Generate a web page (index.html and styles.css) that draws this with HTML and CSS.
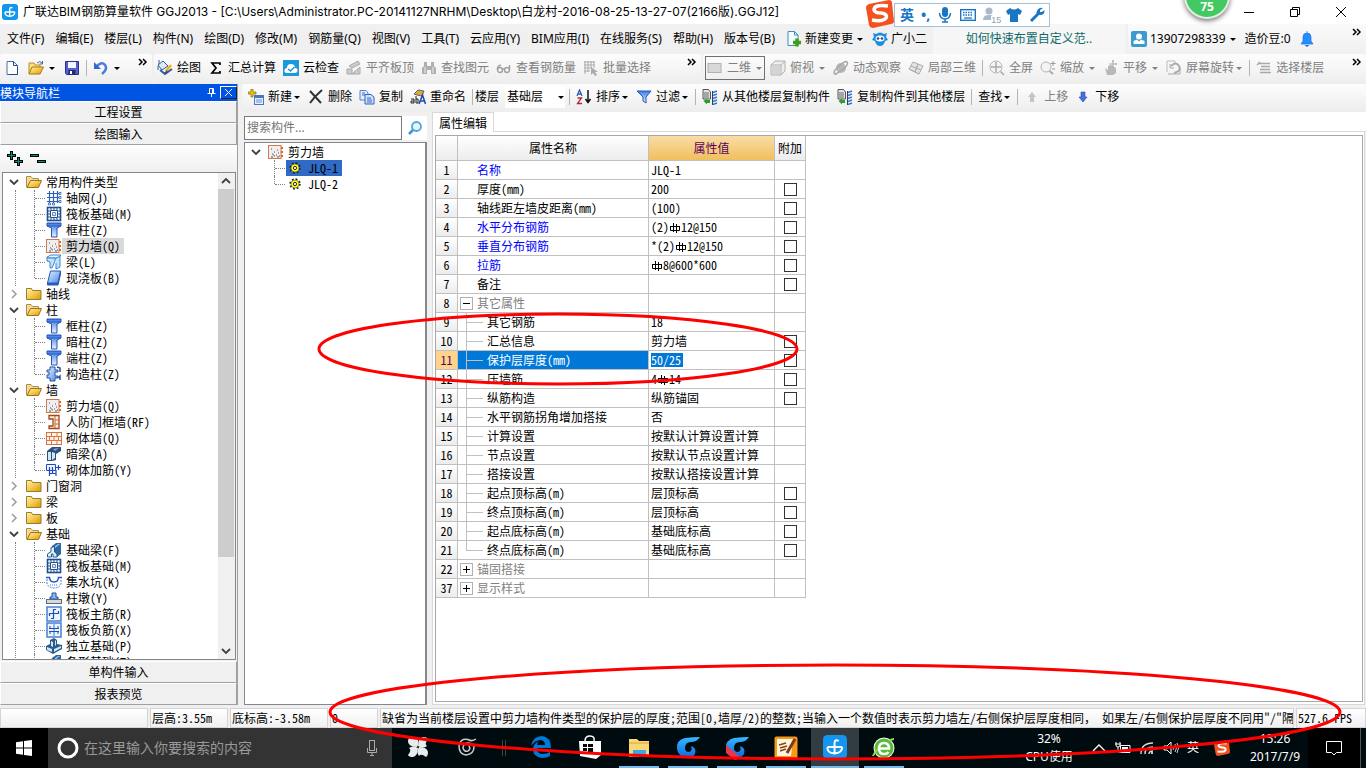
FILE: index.html
```html
<!DOCTYPE html>
<html lang="zh-CN">
<head>
<meta charset="utf-8">
<title>广联达BIM钢筋算量软件 GGJ2013</title>
<link rel="stylesheet" href="styles.css">
</head>
<body>
<svg class="defs" aria-hidden="true">
<defs>
<linearGradient id="gold" x1="0" y1="0" x2="1" y2="1"><stop offset="0" stop-color="#fff3b0"/><stop offset=".5" stop-color="#f6c850"/><stop offset="1" stop-color="#d8960c"/></linearGradient>
<linearGradient id="blue" x1="0" y1="0" x2="0" y2="1"><stop offset="0" stop-color="#3a78e8"/><stop offset="1" stop-color="#e8f4ff"/></linearGradient>
<linearGradient id="blue2" x1="0" y1="0" x2="1" y2="1"><stop offset="0" stop-color="#e4f2ff"/><stop offset="1" stop-color="#4a88e8"/></linearGradient>
<linearGradient id="swirl" x1="0" y1="0" x2="0" y2="1"><stop offset="0" stop-color="#38b8ff"/><stop offset="1" stop-color="#0868e0"/></linearGradient>
<symbol id="app" viewBox="0 0 16 16"><rect width="16" height="16" rx="3" fill="#1296f0"/><path d="M10.500 4Q7.700 2.500 7.700 5.500V12.500M3 8H12.800M3 8Q2.500 12 7.700 12.300Q12.800 12 12.800 8" fill="none" stroke="#fff" stroke-width="1.300"/></symbol>
<symbol id="new" viewBox="0 0 16 16"><path d="M3 1.500H9.500L13.500 5.500V14.500H3Z" fill="#fff" stroke="#4a6fa5"/><path d="M9.500 1.500V5.500H13.500M13.500 7V14.500H5" fill="none" stroke="#234a80"/></symbol>
<symbol id="open" viewBox="0 0 16 16"><path d="M1 14V3H6L7 5H12V7" fill="#fbe08a" stroke="#b8901c"/><path d="M1 14L4 7H15.500L12 14Z" fill="url(#gold)" stroke="#a87808"/><path d="M9 3Q12 0 14 3M14.500 1V4H11.500" fill="none" stroke="#446a90"/></symbol>
<symbol id="save" viewBox="0 0 16 16"><path d="M1.500 1.500H14.500V14.500H2.500L1.500 13Z" fill="#5560c8" stroke="#272f90"/><rect x="4" y="2" width="8" height="6" fill="#f4f6ff"/><rect x="4.500" y="10" width="7" height="5" fill="#222c70"/><rect x="6" y="11" width="2" height="3" fill="#fff"/></symbol>
<symbol id="undo" viewBox="0 0 16 16"><path d="M4 6Q9 1 12 5T9 14" fill="none" stroke="#4c7be0" stroke-width="2.500"/><path d="M1 2V9H8Z" fill="#3468d0"/></symbol>
<symbol id="chev" viewBox="0 0 10 8"><path d="M1 1L4 4L1 7M5 1L8 4L5 7" fill="none" stroke="#000" stroke-width="1.500"/></symbol>
<symbol id="caret" viewBox="0 0 8 8"><path d="M1 3H7L4 6Z" fill="currentColor"/></symbol>
<symbol id="paint" viewBox="0 0 16 16"><path d="M1 5L6 1L11 6L5 10Z" fill="#dce9ff" stroke="#345a98"/><path d="M2 4V0M1 6V10" stroke="#345a98"/><path d="M3 10L8 14L15 9" fill="none" stroke="#345a98" stroke-width="2"/><path d="M9 11L14 5" stroke="#f0b020" stroke-width="2.500"/><path d="M7 13L10 10L11 13Z" fill="#2b4f8a"/></symbol>
<symbol id="sigma" viewBox="0 0 16 16"><path d="M12 5V3H4L8 8L4 13H12V11" fill="none" stroke="#000" stroke-width="1.700"/></symbol>
<symbol id="cloud" viewBox="0 0 16 16"><rect width="16" height="16" fill="#1d98dc"/><path d="M4 13Q1 13 1.500 10Q2 8 4 8Q4 4 8 4Q12 4 12 8Q15 8 14.500 11Q14 13 12 13Z" fill="#fff"/><path d="M5 9L7.500 11L11.500 7" fill="none" stroke="#1d98dc" stroke-width="1.500"/></symbol>
<symbol id="align" viewBox="0 0 16 16"><path d="M3 6L12 1L14 4L6 8ZM1 9H6V14H1Z" fill="#ccc" stroke="#a8a8a8"/><path d="M6 14L14 7V14Z" fill="#ddd" stroke="#a8a8a8"/><path d="M9 11V14M12 9V14" stroke="#a8a8a8"/></symbol>
<symbol id="binoc" viewBox="0 0 16 16"><path d="M3 2H6V6H10V2H13V6L15 8V14H10V10H6V14H1V8L3 6Z" fill="#b0b0b0"/><path d="M4 7V13M12 7V13" stroke="#eee"/></symbol>
<symbol id="glasses" viewBox="0 0 16 16"><circle cx="4" cy="10" r="2.500" fill="none" stroke="#a0a0a0" stroke-width="1.400"/><circle cx="11" cy="10" r="2.500" fill="none" stroke="#a0a0a0" stroke-width="1.400"/><path d="M1.500 10Q1 6 5 5M13.500 10V5M6 9H9" fill="none" stroke="#a0a0a0" stroke-width="1.400"/></symbol>
<symbol id="batch" viewBox="0 0 16 16"><path d="M1 2H12M1 5H12M1 8H8M1 11H7M2 1V14M5 1V12M8 1V8M11 1V8" stroke="#aaa"/><path d="M8 7L15 12L12 12L14 15L12 16L10 13L8 15Z" fill="#aaa"/></symbol>
<symbol id="rect" viewBox="0 0 16 16"><rect x="1" y="3.500" width="13" height="9" fill="#d8d8d8" stroke="#b0b0b0"/></symbol>
<symbol id="cube" viewBox="0 0 16 16"><path d="M1 5L5 1H15V11L11 15H1Z" fill="#eee" stroke="#b0b0b0"/><path d="M1 5H11V15M11 5L15 1" fill="none" stroke="#b0b0b0"/><path d="M2 6H10V14H2Z" fill="#d4d4d4"/></symbol>
<symbol id="orbit" viewBox="0 0 16 16"><circle cx="8" cy="8" r="5" fill="#b8b8b8"/><path d="M2 14Q-1 12 6 6T14 2Q16 5 9 10T2 14Z" fill="none" stroke="#a8a8a8" stroke-width="1.500"/></symbol>
<symbol id="part3" viewBox="0 0 16 16"><path d="M1 9L5 2L10 4L7 12ZM7 12L10 4L15 6L11 14ZM3 6L13 10M1 9L11 14" fill="#e4e4e4" stroke="#adadad"/></symbol>
<symbol id="full" viewBox="0 0 16 16"><circle cx="7" cy="7" r="6" fill="#f4f4f4" stroke="#b4b4b4"/><path d="M7 2V12M2 7H12M11.500 11.500L15 15" stroke="#aaa" stroke-width="1.500"/></symbol>
<symbol id="zoomi" viewBox="0 0 16 16"><circle cx="6" cy="7" r="5" fill="#f4f4f4" stroke="#b4b4b4"/><path d="M9.500 11L13 14" stroke="#aaa" stroke-width="2"/><path d="M13 1V6M10.500 3.500H15.500M12 9H15" stroke="#999"/></symbol>
<symbol id="pan" viewBox="0 0 16 16"><path d="M2 8L5 10V6L8 5L13 8V13L10 15H4Z" fill="#b8b8b8"/><path d="M10 0V8M6 4H14M9 1H11M13 3V5" stroke="#aaa"/></symbol>
<symbol id="rot" viewBox="0 0 16 16"><path d="M1 1H9V3M1 1V12" fill="none" stroke="#bbb"/><path d="M5 6Q10 1 13 6T8 13" fill="none" stroke="#aaa" stroke-width="2"/><path d="M4 4V8H8M2 14H14V9" fill="none" stroke="#aaa"/></symbol>
<symbol id="floor" viewBox="0 0 16 16"><path d="M3 3.500H14M5 6.500H14M4 9.500H14M4 12.500H15M1 5L4 2" stroke="#a8a8a8" stroke-width="1.500"/></symbol>
<symbol id="add" viewBox="0 0 16 16"><path d="M3 0H5V3H8V5H5V8H3V5H0V3H3Z" fill="#f0c818" stroke="#8b6a00" stroke-width=".7"/><rect x="6.500" y="6.500" width="9" height="9" fill="#e4efff" stroke="#4878c0"/><path d="M7 8H15" stroke="#4878c0" stroke-width="2"/><path d="M8 11H14M8 13H14" stroke="#7090c0"/></symbol>
<symbol id="del" viewBox="0 0 16 16"><path d="M2 2L13 14M14 1Q7 7 2 14" fill="none" stroke="#333" stroke-width="2"/></symbol>
<symbol id="copy" viewBox="0 0 16 16"><path d="M1 1.500H7L9 4V11H1Z" fill="#e5f0ff" stroke="#5080c8"/><path d="M6 5.500H12L15 8V15H6Z" fill="#cfe2ff" stroke="#3562b8"/><path d="M3 4H6M3 6H6M8 9H12M8 11H13M8 13H13" stroke="#3868b8"/></symbol>
<symbol id="ren" viewBox="0 0 16 16"><path d="M4 5L8 1L14 2L12 7L7 6Z" fill="#dfa83c" stroke="#5f6470"/><path d="M1 10H4V14H1V12H4M6 7V14H8V10H6" fill="none" stroke="#222"/><path d="M9 15L12.500 6L15.500 15M10 12H15" fill="none" stroke="#1f4fa8" stroke-width="1.600"/></symbol>
<symbol id="az" viewBox="0 0 16 16"><path d="M1 7L3.500 1L6 7M2 5H5" fill="none" stroke="#3858b8" stroke-width="1.300"/><path d="M1.500 9H5.500L1.500 14.500H6" fill="none" stroke="#b02838" stroke-width="1.300"/><path d="M12 1V13M9.500 10L12 13.500L14.500 10" fill="none" stroke="#111" stroke-width="1.500"/></symbol>
<symbol id="filter" viewBox="0 0 16 16"><path d="M1 2H15L10 8V14L7 12V8Z" fill="url(#blue)" stroke="#2858b8"/></symbol>
<symbol id="cpf" viewBox="0 0 16 16"><path d="M1 .5H6.500L8.500 3V10H1Z" fill="#e4e4e4" stroke="#555"/><path d="M2 4H7M2 6H7M2 8H7" stroke="#666"/><path d="M11 3.500L15 2M11 6.500L15 5M11 9.500L15 8M11 12.500L15 11M11 15.500L15 14" stroke="#3878c8" stroke-width="1.500"/><path d="M10.500 2V16" stroke="#24406c"/><path d="M1.500 12L5 9.500V11H8V14H5V15.500Z" fill="#2ca02c"/></symbol>
<symbol id="up" viewBox="0 0 16 16"><path d="M8 3L12 8H10V13H6V8H4Z" fill="#c4c4c4"/></symbol>
<symbol id="down" viewBox="0 0 16 16"><path d="M8 13L12 8H10V3H6V8H4Z" fill="#4670e0" stroke="#2848a8" stroke-width=".6"/></symbol>
<symbol id="newdoc" viewBox="0 0 16 16"><path d="M2 .500H8.500L12 4V14.500H2Z" fill="#f4fbff" stroke="#3a90c0"/><path d="M8.500 .500V4H12" fill="none" stroke="#3a90c0"/><path d="M11 7.500V15.500M7 11.500H15" stroke="#3d9e18" stroke-width="3.500"/></symbol>
<symbol id="owl" viewBox="0 0 16 16"><path d="M1 2L4 3Q8 0 12 3L15 2L14 6L16 9L13 10Q12 15 8 15Q4 15 3 10L0 9L2 6Z" fill="#1e8ce0"/><ellipse cx="8" cy="7.500" rx="4.500" ry="3" fill="#fff"/><circle cx="6" cy="7.500" r="1.300" fill="#124f9c"/><circle cx="10" cy="7.500" r="1.300" fill="#124f9c"/></symbol>
<symbol id="user" viewBox="0 0 16 16"><rect width="16" height="16" rx="2" fill="#3b9bcf"/><circle cx="8" cy="5.500" r="3" fill="#fff"/><path d="M2.500 13V10L6 8.500L8 10.500L10 8.500L13.500 10V13Z" fill="#fff"/></symbol>
<symbol id="bell" viewBox="0 0 16 16"><path d="M8 0V2M4 10V6Q4 2 8 2T12 6V10L14 13H2Z" fill="#2490ff" stroke="#2074d8" stroke-width=".7"/><path d="M5.500 14H10.500L8 16Z" fill="#1878e8"/></symbol>
<symbol id="sogou" viewBox="0 0 28 28"><path d="M3 4L23 0Q26 0 26 3L28 21Q28 24 25 24L7 28Q4 28 3 25L0 8Q0 5 3 4Z" fill="#f4511e"/><path d="M22 6Q8 4 8 10Q9 13 15 13Q22 14 20 18Q17 22 6 20" fill="none" stroke="#fff" stroke-width="3.500"/></symbol>
<symbol id="mic" viewBox="0 0 16 16"><rect x="5" y="0" width="6" height="10" rx="3" fill="currentColor"/><path d="M2.500 6Q3 12 8 12T13.500 6M8 12V15M5 15H11" fill="none" stroke="currentColor" stroke-width="1.500"/></symbol>
<symbol id="micline" viewBox="0 0 12 16"><rect x="3.500" y=".5" width="5" height="10" fill="none" stroke="#aaa"/><path d="M1.500 8V12.500H10.500V8M6 13V15.500M4 15.500H8" fill="none" stroke="#aaa"/></symbol>
<symbol id="kbd" viewBox="0 0 16 16"><rect x=".7" y="2.700" width="14.600" height="10.600" fill="#fff" stroke="#1976c5" stroke-width="1.400"/><path d="M3 5.500H13M3 8H13" stroke="#1976c5" stroke-width="1.500" stroke-dasharray="1.500 1"/><path d="M4 11H12" stroke="#1976c5" stroke-width="1.300"/></symbol>
<symbol id="person" viewBox="0 0 16 16"><circle cx="6" cy="4" r="3.500" fill="#a9b9cb"/><path d="M0 13Q0 8 6 8T11 13Z" fill="#a9b9cb"/></symbol>
<symbol id="shirt" viewBox="0 0 16 16"><path d="M4 1Q8 4 12 1L16 4L14 8L12 7V15H4V7L2 8L0 4Z" fill="#1976c5"/></symbol>
<symbol id="wrench" viewBox="0 0 16 16"><path d="M2 14L9 7" stroke="#1976c5" stroke-width="3"/><path d="M14 1L11 3V5H13L15.500 3Q16 8 11 8T8 4T14 1Z" fill="#1976c5"/></symbol>
<symbol id="mag" viewBox="0 0 16 16"><circle cx="9.500" cy="6.500" r="4.500" fill="#e4f6ff" stroke="#4aa5e0" stroke-width="1.800"/><path d="M6 10L2 14" stroke="#3b96d8" stroke-width="2.500"/></symbol>
<symbol id="exp" viewBox="0 0 16 16"><path d="M4 6L8 10L12 6" fill="none" stroke="#404040" stroke-width="1.800"/></symbol>
<symbol id="col" viewBox="0 0 16 16"><path d="M6 4L10 8L6 12" fill="none" stroke="#a0a0a0" stroke-width="1.600"/></symbol>
<symbol id="fopen" viewBox="0 0 16 16"><path d="M.5 13V2.500H5L6.500 4.500H12.500V7" fill="#f6dc88" stroke="#a89058"/><path d="M1 13.500L4.500 6.500H15.500L12.500 13.500Z" fill="url(#gold)" stroke="#9c7418"/></symbol>
<symbol id="fold" viewBox="0 0 16 16"><path d="M.5 13.500V2.500H5.500L6.500 4.500H15V13.500Z" fill="url(#gold)" stroke="#9c7c28"/></symbol>
<symbol id="grid" viewBox="0 0 16 16"><path d="M3.500 1V13M7.500 1V13M11.500 1V13M1 3.500H13M1 7.500H13M1 11.500H13" stroke="#2f62b4" stroke-width="1.200"/><path d="M13 2.500H15V4.500H13ZM13 6.500H15V8.500H13ZM13 10.500H15V12.500H13ZM2.500 13H4.500V15H2.500ZM6.500 13H8.500V15H6.500Z" fill="#fff" stroke="#2f62b4" stroke-width=".8"/></symbol>
<symbol id="raft" viewBox="0 0 16 16"><rect x="1.500" y="1.500" width="13" height="13" fill="#fff" stroke="#1d4e90" stroke-width="1.600"/><path d="M4.500 4.500H11.500V11.500H4.500Z" fill="none" stroke="#1d4e90"/><path d="M6.500 6.500H9.500V9.500H6.500Z" fill="#dce9ff" stroke="#1d4e90" stroke-width=".6"/><path d="M5 2V4M8 2V4M11 2V4M5 12V14M8 12V14M11 12V14M2 5H4M2 8H4M2 11H4M12 5H14M12 8H14M12 11H14" stroke="#1d4e90"/></symbol>
<symbol id="post" viewBox="0 0 16 16"><path d="M1 1H15V4L11 6V15H5.500V6L1 4Z" fill="url(#blue)" stroke="#2454b8"/><path d="M1 4H15" stroke="#2454b8"/></symbol>
<symbol id="wall" viewBox="0 0 16 16"><rect x=".5" y="1.500" width="12.500" height="13" fill="#f0eeee" stroke="#d07850"/><path d="M3 5H4M6 8H7M4 10H5M8 11H9M10 9H11M3 13H5M6 12H7M9 13H11M9 6H10M5 11H6M11 12H12" stroke="#555"/><path d="M13 4H15M13 8H15M13 12H15" stroke="#e06818" stroke-width="2"/></symbol>
<symbol id="beam" viewBox="0 0 16 16"><path d="M1 3L5 1H15L12 4H1Z" fill="#e6f7ff" stroke="#3c86d0"/><path d="M1 4H9V7L6 14H4V8L1 7ZM9 5L14 2V13L10 15V9" fill="#bfe2fb" stroke="#3c86d0"/></symbol>
<symbol id="slab" viewBox="0 0 16 16"><path d="M1.500 13V15H12L14.500 4V1" fill="#2c62c8" stroke="#2454b8"/><path d="M4.500 1H14.500L12 13H1.500Z" fill="url(#blue2)" stroke="#2454b8"/></symbol>
<symbol id="gz" viewBox="0 0 16 16"><path d="M4 1H9V4H12V6H9V10H12V12H9V15H4V12H1V9H3V6H1V4H4Z" fill="url(#blue2)" stroke="#2a52a0"/><path d="M11 1L14 2V6M12 12L14 10V14" fill="none" stroke="#2a52a0" stroke-width="1.500"/></symbol>
<symbol id="doorw" viewBox="0 0 16 16"><path d="M3 1.500H13V14.500H3V12H7V5H3Z" fill="#fff0e4" stroke="#a04818" stroke-width="1.300"/><path d="M9 2V14M9 6H13M9 10H13" stroke="#c06830"/></symbol>
<symbol id="brick" viewBox="0 0 16 16"><rect x=".5" y="2.500" width="15" height="12" fill="#fff4ec" stroke="#c87848"/><path d="M1 6.500H15M1 10.500H15M5.500 3V6M11 3V6M3.500 7V10M8 7V10M12.500 7V10M5.500 11V14M11 11V14" stroke="#e07838"/></symbol>
<symbol id="abeam" viewBox="0 0 16 16"><path d="M1 5L6 1H15V5L10 8V14L6 15H1Z" fill="#2c507c"/><path d="M2 6H5V14H2ZM6 6L9 7V12L6 14Z" fill="#d4e8f8"/><path d="M7 3L13 2L9 5Z" fill="#87aacb"/></symbol>
<symbol id="mjj" viewBox="0 0 16 16"><path d="M.5 2.500H9.500V8.500H.5Z" fill="#eaf3ff" stroke="#1f48c0"/><path d="M3.500 5V14M6.500 5V12M10 5.500H15M12.500 3V8M10 8V14M3 11.500H10" fill="none" stroke="#1f48c0" stroke-width="1.200"/></symbol>
<symbol id="fbeam" viewBox="0 0 16 16"><path d="M6 4L10 1H15V12L11 15H8Z" fill="#2a68a8"/><path d="M8 5L12 2H14L9 6Z" fill="#9cc8ea"/><path d="M1.500 15V12L5 9.500V5.500L8.500 4.500V10L11 12V15H7V12H5.500V15Z" fill="#d8efff" stroke="#184878" stroke-width=".9"/></symbol>
<symbol id="pit" viewBox="0 0 16 16"><path d="M0 3.500H3.500Q4 8 8 8T12.500 3.500H16" fill="none" stroke="#2458c0" stroke-width="1.500"/><path d="M1 5V10Q3 14 8 14T15 10V5" fill="none" stroke="#4480d8" stroke-dasharray="2 1"/><path d="M4 11H12" stroke="#4480d8" stroke-dasharray="1 1"/></symbol>
<symbol id="dun" viewBox="0 0 16 16"><path d="M6 3H10V7H12V9H4V7H6Z" fill="#88b8f0" stroke="#1d4fa8"/><rect x=".5" y="9.500" width="15" height="4" fill="#d8d8d8" stroke="#5c6878"/></symbol>
<symbol id="rz" viewBox="0 0 16 16"><rect x="1" y="1" width="14" height="14" fill="#eaf3ff" stroke="#4a80d0" stroke-width="1.500"/><path d="M3.500 10V7.500H12.500V5M10 3.500H7.500V12.500H5" fill="none" stroke="#1c50b8" stroke-width="1.200"/></symbol>
<symbol id="rf" viewBox="0 0 16 16"><rect x="1" y="1" width="14" height="14" fill="#eaf3ff" stroke="#4a80d0" stroke-width="1.500"/><path d="M8 2V14" stroke="#7ca0d8" stroke-width="1.500"/><path d="M4 4V6.500H12V4M4 12V9.500H12V12M3 6.500H13M3 9.500H13" fill="none" stroke="#1c50b8"/></symbol>
<symbol id="solo" viewBox="0 0 16 16"><path d="M0 8L4 6V2L8 0L11 2V6L16 7V11L7 16L0 12Z" fill="#285a8c"/><path d="M1 9L6 11V14L1 12ZM8 11L15 8V10L8 14ZM5 3L7 4V9L5 8ZM9 3L10 2V7L9 8Z" fill="#cfe7f8"/></symbol>
<symbol id="gear" viewBox="0 0 12 12"><circle cx="6" cy="6" r="4.700" fill="none" stroke="#222" stroke-width="2" stroke-dasharray="1.800 1.890"/><circle cx="6" cy="6" r="4" fill="#ff0" stroke="#554" stroke-width=".6"/><circle cx="6" cy="6" r="1.600" fill="#fff" stroke="#222"/></symbol>
<symbol id="rebar" viewBox="0 0 12 12"><path d="M4.500 1V10M7.500 2V11M1.500 4V8.500M10.500 4V8.500M1.500 4.500H10.500M1.500 8.500H10.500" fill="none" stroke="currentColor"/></symbol>
<symbol id="swirlb" viewBox="0 0 24 24"><path d="M24 1Q21 6 15 6Q9 6 9 12Q9 16 13 16Q17 15 15 10Q21 12 19 18Q16 23 10 22Q2 20 1 13Q0 4 9 2Q17 1 24 1Z" fill="url(#swirl)"/></symbol>
</defs>
</svg>

<header class="titlebar">
  <svg class="i16"><use href="#app"/></svg>
  <h1>广联达BIM钢筋算量软件 GGJ2013 - [C:\Users\Administrator.PC-20141127NRHM\Desktop\白龙村-2016-08-25-13-27-07(2166版).GGJ12]</h1>
  <div class="winbtns">
    <button aria-label="最小化"><svg viewBox="0 0 10 10"><path d="M0 5.500H10" stroke="#000"/></svg></button>
    <button aria-label="还原"><svg viewBox="0 0 10 10"><path d="M.5 2.500H7.500V9.500H.5ZM2.500 2V.5H9.500V7.500H8" fill="none" stroke="#000"/></svg></button>
    <button aria-label="关闭"><svg viewBox="0 0 10 10"><path d="M0 0L10 10M10 0L0 10" stroke="#000"/></svg></button>
  </div>
  <div class="ime">
    <svg class="ime-logo"><use href="#sogou"/></svg>
    <div class="ime-bar">
      <b>英</b><b>•,</b><svg class="i16"><use href="#mic"/></svg><svg class="i16"><use href="#kbd"/></svg>
      <span class="lv"><svg class="i16"><use href="#person"/></svg><em>15</em></span>
      <svg class="i16"><use href="#shirt"/></svg><svg class="i16"><use href="#wrench"/></svg>
    </div>
  </div>
  <div class="ball">75</div>
</header>

<div class="menubar">
  <nav class="menus">
    <button>文件(F)</button><button>编辑(E)</button><button>楼层(L)</button><button>构件(N)</button><button>绘图(D)</button><button>修改(M)</button><button>钢筋量(Q)</button><button>视图(V)</button><button>工具(T)</button><button>云应用(Y)</button><button>BIM应用(I)</button><button>在线服务(S)</button><button>帮助(H)</button><button>版本号(B)</button>
  </nav>
  <div class="menuextra">
    <button class="tb"><svg class="i16"><use href="#newdoc"/></svg>新建变更<svg class="car"><use href="#caret"/></svg></button>
    <button class="tb"><svg class="i16"><use href="#owl"/></svg>广小二</button>
  </div>
  <div class="tip"><a href="#tip">如何快速布置自定义范..</a></div>
  <div class="account">
    <button class="tb"><svg class="i16"><use href="#user"/></svg>13907298339<svg class="car"><use href="#caret"/></svg></button>
    <button class="tb">造价豆:0</button>
    <button class="tb" aria-label="通知"><svg class="i16"><use href="#bell"/></svg></button>
    <svg class="chev"><use href="#chev"/></svg>
  </div>
</div>

<div class="toolbars">
  <div class="bar bar-file">
    <button class="tb" aria-label="新建"><svg class="i16"><use href="#new"/></svg></button>
    <button class="tb" aria-label="打开"><svg class="i16"><use href="#open"/></svg><svg class="car"><use href="#caret"/></svg></button>
    <button class="tb" aria-label="保存"><svg class="i16"><use href="#save"/></svg></button>
    <i class="sep"></i>
    <button class="tb" aria-label="撤销"><svg class="i16"><use href="#undo"/></svg><svg class="car"><use href="#caret"/></svg></button>
    <svg class="chev"><use href="#chev"/></svg>
  </div>
  <div class="bar bar-draw">
    <button class="tb"><svg class="i16"><use href="#paint"/></svg>绘图</button>
    <button class="tb"><svg class="i16"><use href="#sigma"/></svg>汇总计算</button>
    <button class="tb"><svg class="i16"><use href="#cloud"/></svg>云检查</button>
    <button class="tb off"><svg class="i16"><use href="#align"/></svg>平齐板顶</button>
    <button class="tb off"><svg class="i16"><use href="#binoc"/></svg>查找图元</button>
    <button class="tb off"><svg class="i16"><use href="#glasses"/></svg>查看钢筋量</button>
    <button class="tb off"><svg class="i16"><use href="#batch"/></svg>批量选择</button>
    <svg class="chev"><use href="#chev"/></svg>
  </div>
  <div class="bar bar-view">
    <button class="tb off framed"><svg class="i16"><use href="#rect"/></svg>二维<svg class="car"><use href="#caret"/></svg></button>
    <button class="tb off"><svg class="i16"><use href="#cube"/></svg>俯视<svg class="car"><use href="#caret"/></svg></button>
    <button class="tb off"><svg class="i16"><use href="#orbit"/></svg>动态观察</button>
    <button class="tb off"><svg class="i16"><use href="#part3"/></svg>局部三维</button>
    <i class="sep"></i>
    <button class="tb off"><svg class="i16"><use href="#full"/></svg>全屏</button>
    <button class="tb off"><svg class="i16"><use href="#zoomi"/></svg>缩放<svg class="car"><use href="#caret"/></svg></button>
    <button class="tb off"><svg class="i16"><use href="#pan"/></svg>平移<svg class="car"><use href="#caret"/></svg></button>
    <button class="tb off tight"><svg class="i16"><use href="#rot"/></svg>屏幕旋转<svg class="car"><use href="#caret"/></svg></button>
    <i class="sep"></i>
    <button class="tb off"><svg class="i16"><use href="#floor"/></svg>选择楼层</button>
    <svg class="chev"><use href="#chev"/></svg>
  </div>
</div>

<main class="work">
  <aside class="nav song">
    <div class="nav-title"><span>模块导航栏</span>
      <svg class="pin" viewBox="0 0 9 9"><path d="M2.500 5V.5H6.500V5M5.500 1V5M.5 5.500H8.500M4.500 6V9" fill="none" stroke="#fff"/></svg>
      <button aria-label="关闭"><svg viewBox="0 0 9 9"><path d="M1 1L8 8M8 1L1 8" stroke="#fff"/></svg></button>
    </div>
    <button class="nav-btn">工程设置</button>
    <button class="nav-btn">绘图输入</button>
    <div class="nav-tools">
      <button aria-label="全部展开"><svg class="i16" viewBox="0 0 16 16"><path d="M4.500 0V9M0 4.500H9M11.500 6V15M7 10.500H16" stroke="#000" stroke-width="3"/><path d="M4.500 1V8M1 4.500H8M11.500 7V14M8 10.500H15" stroke="#0a8a7a"/></svg></button>
      <button aria-label="全部折叠"><svg class="i16" viewBox="0 0 16 16"><path d="M0 4.500H9M7 10.500H16" stroke="#000" stroke-width="3"/><path d="M1 4.500H8M8 10.500H15" stroke="#0a8a7a"/></svg></button>
    </div>
    <div class="treebox">
      <ul class="tree">
        <li><div class="row"><svg class="i16"><use href="#exp"/></svg><svg class="i16 f"><use href="#fopen"/></svg>常用构件类型</div>
          <ul class="kids">
            <li><svg class="i16"><use href="#grid"/></svg><span>轴网(J)</span></li>
            <li><svg class="i16"><use href="#raft"/></svg><span>筏板基础(M)</span></li>
            <li><svg class="i16"><use href="#post"/></svg><span>框柱(Z)</span></li>
            <li><svg class="i16"><use href="#wall"/></svg><span class="sel">剪力墙(Q)</span></li>
            <li><svg class="i16"><use href="#beam"/></svg><span>梁(L)</span></li>
            <li><svg class="i16"><use href="#slab"/></svg><span>现浇板(B)</span></li>
          </ul></li>
        <li><div class="row"><svg class="i16"><use href="#col"/></svg><svg class="i16 f"><use href="#fold"/></svg>轴线</div></li>
        <li><div class="row"><svg class="i16"><use href="#exp"/></svg><svg class="i16 f"><use href="#fopen"/></svg>柱</div>
          <ul class="kids">
            <li><svg class="i16"><use href="#post"/></svg><span>框柱(Z)</span></li>
            <li><svg class="i16"><use href="#post"/></svg><span>暗柱(Z)</span></li>
            <li><svg class="i16"><use href="#post"/></svg><span>端柱(Z)</span></li>
            <li><svg class="i16"><use href="#gz"/></svg><span>构造柱(Z)</span></li>
          </ul></li>
        <li><div class="row"><svg class="i16"><use href="#exp"/></svg><svg class="i16 f"><use href="#fopen"/></svg>墙</div>
          <ul class="kids">
            <li><svg class="i16"><use href="#wall"/></svg><span>剪力墙(Q)</span></li>
            <li><svg class="i16"><use href="#doorw"/></svg><span>人防门框墙(RF)</span></li>
            <li><svg class="i16"><use href="#brick"/></svg><span>砌体墙(Q)</span></li>
            <li><svg class="i16"><use href="#abeam"/></svg><span>暗梁(A)</span></li>
            <li><svg class="i16"><use href="#mjj"/></svg><span>砌体加筋(Y)</span></li>
          </ul></li>
        <li><div class="row"><svg class="i16"><use href="#col"/></svg><svg class="i16 f"><use href="#fold"/></svg>门窗洞</div></li>
        <li><div class="row"><svg class="i16"><use href="#col"/></svg><svg class="i16 f"><use href="#fold"/></svg>梁</div></li>
        <li><div class="row"><svg class="i16"><use href="#col"/></svg><svg class="i16 f"><use href="#fold"/></svg>板</div></li>
        <li><div class="row"><svg class="i16"><use href="#exp"/></svg><svg class="i16 f"><use href="#fopen"/></svg>基础</div>
          <ul class="kids">
            <li><svg class="i16"><use href="#fbeam"/></svg><span>基础梁(F)</span></li>
            <li><svg class="i16"><use href="#raft"/></svg><span>筏板基础(M)</span></li>
            <li><svg class="i16"><use href="#pit"/></svg><span>集水坑(K)</span></li>
            <li><svg class="i16"><use href="#dun"/></svg><span>柱墩(Y)</span></li>
            <li><svg class="i16"><use href="#rz"/></svg><span>筏板主筋(R)</span></li>
            <li><svg class="i16"><use href="#rf"/></svg><span>筏板负筋(X)</span></li>
            <li><svg class="i16"><use href="#solo"/></svg><span>独立基础(P)</span></li>
            <li><svg class="i16"><use href="#fbeam"/></svg><span>条形基础(T)</span></li>
          </ul></li>
      </ul>
      <div class="scroll"><svg class="i16 flip"><use href="#exp"/></svg><div class="track"><div class="thumb"></div></div><svg class="i16"><use href="#exp"/></svg></div>
    </div>
    <button class="nav-btn">单构件输入</button>
    <button class="nav-btn">报表预览</button>
  </aside>

  <section class="right">
    <div class="bar bar-edit">
      <button class="tb tight"><svg class="i16"><use href="#add"/></svg>新建<svg class="car"><use href="#caret"/></svg></button>
      <button class="tb"><svg class="i16"><use href="#del"/></svg>删除</button>
      <button class="tb"><svg class="i16"><use href="#copy"/></svg>复制</button>
      <button class="tb"><svg class="i16"><use href="#ren"/></svg>重命名</button>
      <i class="sep"></i>
      <label class="floor">楼层<select><option>基础层</option></select><svg class="car"><use href="#caret"/></svg></label>
      <i class="sep"></i>
      <button class="tb tight"><svg class="i16"><use href="#az"/></svg>排序<svg class="car"><use href="#caret"/></svg></button>
      <button class="tb tight"><svg class="i16"><use href="#filter"/></svg>过滤<svg class="car"><use href="#caret"/></svg></button>
      <i class="sep"></i>
      <button class="tb"><svg class="i16"><use href="#cpf"/></svg>从其他楼层复制构件</button>
      <button class="tb"><svg class="i16"><use href="#cpf"/></svg>复制构件到其他楼层</button>
      <i class="sep"></i>
      <button class="tb tight">查找<svg class="car"><use href="#caret"/></svg></button>
      <i class="sep"></i>
      <button class="tb off"><svg class="i16"><use href="#up"/></svg>上移</button>
      <button class="tb"><svg class="i16"><use href="#down"/></svg>下移</button>
    </div>
    <div class="panes">
      <section class="comps">
        <div class="search"><input type="text" placeholder="搜索构件..." aria-label="搜索构件"><button aria-label="搜索"><svg class="i16"><use href="#mag"/></svg></button></div>
        <div class="complist song">
          <div class="row"><svg class="i16"><use href="#exp"/></svg><svg class="i16 f"><use href="#wall"/></svg>剪力墙</div>
          <ul class="kids">
            <li><span class="on"><svg class="gear"><use href="#gear"/></svg>JLQ-1</span></li>
            <li><span><svg class="gear"><use href="#gear"/></svg>JLQ-2</span></li>
          </ul>
        </div>
      </section>
      <section class="props song">
        <div class="tabs"><button class="tab">属性编辑</button></div>
        <div class="page"><div class="inner">
          <table>
            <colgroup><col class="c1"><col class="c2"><col class="c3"><col class="c4"></colgroup>
            <thead><tr><th></th><th>属性名称</th><th class="act">属性值</th><th>附加</th></tr></thead>
            <tbody>
              <tr><th>1</th><td class="n blue">名称</td><td>JLQ-1</td><td></td></tr>
              <tr><th>2</th><td class="n">厚度(mm)</td><td>200</td><td><input type="checkbox" aria-label="厚度"></td></tr>
              <tr><th>3</th><td class="n">轴线距左墙皮距离(mm)</td><td>(100)</td><td><input type="checkbox" aria-label="轴线距左墙皮距离"></td></tr>
              <tr><th>4</th><td class="n blue">水平分布钢筋</td><td>(2)<svg class="rb"><use href="#rebar"/></svg>12@150</td><td><input type="checkbox" aria-label="水平分布钢筋"></td></tr>
              <tr><th>5</th><td class="n blue">垂直分布钢筋</td><td>*(2)<svg class="rb"><use href="#rebar"/></svg>12@150</td><td><input type="checkbox" aria-label="垂直分布钢筋"></td></tr>
              <tr><th>6</th><td class="n blue">拉筋</td><td><svg class="rb"><use href="#rebar"/></svg>8@600*600</td><td><input type="checkbox" aria-label="拉筋"></td></tr>
              <tr><th>7</th><td class="n">备注</td><td></td><td><input type="checkbox" aria-label="备注"></td></tr>
              <tr><th>8</th><td class="n grp"><button class="pm" aria-label="折叠"><svg viewBox="0 0 11 11"><path d="M2 5.500H9" stroke="#000"/></svg></button>其它属性</td><td></td><td></td></tr>
              <tr><th>9</th><td class="n sub">其它钢筋</td><td>18</td><td></td></tr>
              <tr><th>10</th><td class="n sub">汇总信息</td><td>剪力墙</td><td><input type="checkbox" aria-label="汇总信息"></td></tr>
              <tr class="cur"><th>11</th><td class="n sub">保护层厚度(mm)</td><td><input class="val" type="text" value="50/25" aria-label="保护层厚度"></td><td><input type="checkbox" aria-label="保护层厚度附加"></td></tr>
              <tr><th>12</th><td class="n sub">压墙筋</td><td>4<svg class="rb"><use href="#rebar"/></svg>14</td><td><input type="checkbox" aria-label="压墙筋"></td></tr>
              <tr><th>13</th><td class="n sub">纵筋构造</td><td>纵筋锚固</td><td><input type="checkbox" aria-label="纵筋构造"></td></tr>
              <tr><th>14</th><td class="n sub">水平钢筋拐角增加搭接</td><td>否</td><td></td></tr>
              <tr><th>15</th><td class="n sub">计算设置</td><td>按默认计算设置计算</td><td></td></tr>
              <tr><th>16</th><td class="n sub">节点设置</td><td>按默认节点设置计算</td><td></td></tr>
              <tr><th>17</th><td class="n sub">搭接设置</td><td>按默认搭接设置计算</td><td></td></tr>
              <tr><th>18</th><td class="n sub">起点顶标高(m)</td><td>层顶标高</td><td><input type="checkbox" aria-label="起点顶标高"></td></tr>
              <tr><th>19</th><td class="n sub">终点顶标高(m)</td><td>层顶标高</td><td><input type="checkbox" aria-label="终点顶标高"></td></tr>
              <tr><th>20</th><td class="n sub">起点底标高(m)</td><td>基础底标高</td><td><input type="checkbox" aria-label="起点底标高"></td></tr>
              <tr><th>21</th><td class="n sub last">终点底标高(m)</td><td>基础底标高</td><td><input type="checkbox" aria-label="终点底标高"></td></tr>
              <tr><th>22</th><td class="n grp"><button class="pm" aria-label="展开"><svg viewBox="0 0 11 11"><path d="M2 5.500H9M5.500 2V9" stroke="#000"/></svg></button>锚固搭接</td><td></td><td></td></tr>
              <tr><th>37</th><td class="n grp"><button class="pm" aria-label="展开"><svg viewBox="0 0 11 11"><path d="M2 5.500H9M5.500 2V9" stroke="#000"/></svg></button>显示样式</td><td></td><td></td></tr>
            </tbody>
          </table>
        </div></div>
      </section>
    </div>
  </section>
</main>

<div class="status song">
  <span class="s1"></span><span class="s2">层高:3.55m</span><span class="s3">底标高:-3.58m</span><span class="s4">0</span><span class="s5">缺省为当前楼层设置中剪力墙构件类型的保护层的厚度;范围[0,墙厚/2)的整数;当输入一个数值时表示剪力墙左/右侧保护层厚度相同<i>，</i> 如果左/右侧保护层厚度不同用"/"隔</span><span class="s6">527.6 FPS</span>
</div>

<footer class="taskbar">
  <button class="start" aria-label="开始"><svg class="i16" viewBox="0 0 16 16"><path d="M0 2.200L7 1.200V7.500H0ZM8 1L16 0V7.500H8ZM0 8.500H7V14.800L0 13.800ZM8 8.500H16V16L8 15Z" fill="#fff"/></svg></button>
  <label class="cortana"><svg class="ring" viewBox="0 0 24 24"><circle cx="12" cy="12" r="9" fill="none" stroke="#fff" stroke-width="3"/></svg><input type="text" placeholder="在这里输入你要搜索的内容" aria-label="搜索"><svg class="micl"><use href="#micline"/></svg></label>
  <div class="apps">
    <button aria-label="风车"><svg viewBox="0 0 24 24"><g fill="#e8ecec"><path d="M11 12Q3 12 2 7Q2 3 4 2Q9 6 11 3Q14 7 11 12Z"/><path d="M11 12Q3 12 2 7Q2 3 4 2Q9 6 11 3Q14 7 11 12Z" transform="rotate(90 12 12)"/><path d="M11 12Q3 12 2 7Q2 3 4 2Q9 6 11 3Q14 7 11 12Z" transform="rotate(180 12 12)"/><path d="M11 12Q3 12 2 7Q2 3 4 2Q9 6 11 3Q14 7 11 12Z" transform="rotate(270 12 12)"/></g></svg></button>
    <button aria-label="浏览器"><svg viewBox="0 0 24 24"><path d="M21 4Q17 7 13 4.500Q5 3 4 11Q4 19 11 20Q19 19 19 12Q18 8 12 8Q8 9 8 13Q9 17 13 16Q16 14 14 11" fill="none" stroke="#ccc" stroke-width="1.500"/></svg></button>
    <i class="grip"></i>
    <button aria-label="Edge"><svg viewBox="0 0 24 24"><path d="M2 11Q4 1 13 1Q22 2 22 13H8Q8 19 14 19Q18 19 21 17V21Q18 23 13 23Q4 22 4 14Q4 9 10 6Q8 8 8 10H16Q16 6 12 5Q6 5 2 11Z" fill="#0078d7"/></svg></button>
    <button aria-label="应用商店"><svg viewBox="0 0 24 24"><path d="M1 6H23V20L18 24L2 21Z" fill="#fff"/><path d="M7 6Q7 1 12 1T16 6" fill="none" stroke="#fff" stroke-width="1.500"/><path d="M5 9H9V12H5ZM10 9H15V12H10ZM5 13H9V16H5ZM10 13H15V17H10Z" fill="#00090c"/></svg></button>
    <button class="run" aria-label="文件资源管理器"><svg viewBox="0 0 24 24"><path d="M2 3H10L12 5H22V21H2Z" fill="#f8d775"/><path d="M6 21V14H19V21H16V18H9V21Z" fill="#38a8e8"/><path d="M2 7H22" stroke="#d8a838"/></svg></button>
    <button class="run" aria-label="广联达"><svg viewBox="0 0 24 24"><use href="#swirlb"/></svg></button>
    <button class="run" aria-label="广联达新版"><svg viewBox="0 0 24 24"><use href="#swirlb"/><path d="M1 9L16 22L10 24L1 17Z" fill="#e83848"/></svg></button>
    <button class="run" aria-label="便签"><svg viewBox="0 0 24 24"><rect x=".5" y=".5" width="23" height="22" rx="2" fill="#f89818"/><path d="M3 3H19L17 20H3Z" fill="#fff6dc"/><path d="M5 9L12 7M6 12L13 10M6 15L12 13" stroke="#87421c" stroke-width="1.500"/><path d="M21 3L13 17" stroke="#7b3c18" stroke-width="3"/></svg></button>
    <button class="run active" aria-label="GGJ2013"><svg viewBox="0 0 16 16"><use href="#app"/></svg></button>
    <button class="run" aria-label="360浏览器"><svg viewBox="0 0 24 24"><circle cx="12" cy="12" r="10.500" fill="#f2fff0"/><circle cx="12" cy="12" r="9.500" fill="#58bb38"/><path d="M7 12.500H17Q17 7 12 7T7 12.500T12 18Q15 18 16.500 16" fill="none" stroke="#fff" stroke-width="2.500"/><path d="M1 20Q3 15 6 13M17 5Q20 3 22 3" fill="none" stroke="#8fdc52" stroke-width="2"/></svg></button>
  </div>
  <div class="cpu"><span>32%</span><span>CPU使用</span></div>
  <div class="tray">
    <svg viewBox="0 0 16 16"><path d="M2 11L8 5L14 11" fill="none" stroke="#fff" stroke-width="1.300"/></svg>
    <svg viewBox="0 0 16 16"><path d="M5.500 5.500H15V12.500H5.500Z" fill="none" stroke="#fff"/><path d="M7 7H13V11H7Z" fill="#fff"/><path d="M1 2V5Q1 7 3 7T5 5V2M0 4H6M3 7V12H5" fill="none" stroke="#fff"/></svg>
    <svg viewBox="0 0 16 16"><path d="M2 14Q2 3 14 3M6 14Q6 7 14 7M10 14Q10 11 14 11" fill="none" stroke="#ddd" stroke-width="1.400"/><circle cx="13" cy="13" r="1" fill="#fff"/></svg>
    <svg viewBox="0 0 16 16"><path d="M1 6H4L8 2V14L4 10H1Z" fill="none" stroke="#fff"/><path d="M10 6Q12 8 10 10M12 4Q15 8 12 12M14 3Q17 8 14 13" fill="none" stroke="#ccc"/></svg>
    <b>英</b>
    <svg class="sg" viewBox="0 0 28 28"><use href="#sogou"/></svg>
  </div>
  <div class="clock"><span>15:26</span><span>2017/7/9</span></div>
  <button class="notice" aria-label="通知中心"><svg class="i16" viewBox="0 0 16 16"><path d="M.5 1.500H15.500V12.500H10.500L8 15L5.500 12.500H.5Z" fill="none" stroke="#fff"/></svg></button>
</footer>

<svg class="marks" viewBox="0 0 1366 768" aria-hidden="true"><ellipse cx="558" cy="349" rx="239" ry="35"/><ellipse cx="835" cy="712" rx="505" ry="47"/></svg>
</body>
</html>
```
FILE: styles.css
```css
* { box-sizing: border-box; }
body {
  margin: 0;
  position: relative;
  height: 100vh;
  display: flex;
  flex-direction: column;
  overflow: hidden;
  background: #f0f0f0;
  color: #000;
  font: 12px/16px "Noto Sans", "Noto Sans CJK SC", sans-serif;
}
button, input, select { font: inherit; color: inherit; margin: 0; padding: 0; border: 0; background: none; border-radius: 0; }
ul { list-style: none; margin: 0; padding: 0; }
svg { display: block; flex: none; }
.defs { position: absolute; width: 0; height: 0; }
.i16 { width: 16px; height: 16px; }
.song { font-family: "Noto Sans CJK SC", sans-serif; font-feature-settings: "hwid"; }

.titlebar { position: relative; flex: none; height: 24px; display: flex; align-items: center; gap: 5px; padding-left: 2px; background: #fff; }
.titlebar h1 { margin: 0; font: 400 12px/16px Inter, "Noto Sans CJK SC", sans-serif; white-space: nowrap; }
.winbtns { margin-left: auto; display: flex; padding-right: 2px; }
.winbtns button { width: 46px; height: 20px; display: grid; place-items: center; }
.winbtns svg { width: 10px; height: 10px; }
.ime { position: absolute; left: 866px; top: 0; display: flex; z-index: 2; color: #1976c5; }
.ime-logo { width: 28px; height: 28px; }
.ime-bar { height: 24px; margin-top: 3px; display: flex; align-items: center; gap: 7px; padding: 0 4px 0 5px; background: #fff; border: 1px solid #a8bfd8; font-size: 14px; }
.lv { position: relative; }
.lv em { position: absolute; right: -2px; bottom: -2px; font: 9px/9px "Liberation Sans", sans-serif; background: #fff; color: #8da0b5; }
.ball { position: absolute; left: 1184px; top: -27px; width: 46px; height: 46px; padding-top: 24px; border-radius: 50%; background: #42c95f; border: 2px solid #e4ede5; box-shadow: 0 2px 5px #777; color: #fff; font: bold 12px/16px "Noto Sans", sans-serif; text-align: center; z-index: 2; }

.menubar { flex: none; height: 30px; display: flex; }
.menus { display: flex; gap: 11px; padding-left: 7px; align-items: center; }
.menus button { white-space: nowrap; }
.menuextra { display: flex; align-items: center; gap: 8px; padding: 0 6px 0 11px; }
.menubar .tb { gap: 3px; }
.tip { flex: 1; display: flex; align-items: center; justify-content: center; background: #f6f6f6; }
.tip a { color: #0f6a6a; text-decoration: none; white-space: nowrap; }
.account { flex: none; width: 241px; display: flex; align-items: center; gap: 8px; padding: 0 4px 0 3px; background: linear-gradient(#fafafa, #f0f0f0); border-left: 3px solid #f0f0f0; }

.tb { display: flex; align-items: center; gap: 4px; white-space: nowrap; flex: none; }
.off { color: #808080; }
.car { width: 8px; height: 8px; }
.tight .car { margin-left: -3px; }
.chev { width: 10px; height: 8px; margin-left: auto; align-self: flex-start; margin-top: 4px; }
.sep { width: 1px; height: 16px; background: #b4b4b4; flex: none; }
.toolbars { flex: none; height: 30px; display: flex; gap: 2px; }
.bar { display: flex; align-items: center; gap: 7px; background: linear-gradient(#fdfdfd, #ededed); padding: 0 4px 2px; border-radius: 3px; }
.bar-file { flex: none; width: 152px; gap: 8px; }
.bar-draw { flex: none; width: 547px; padding-left: 3px; }
.bar-view { flex: 1; min-width: 0; padding-left: 2px; }
.bar-view .sep, .bar-edit .sep { margin: 0 -1px; }
.bar-file .sep { margin: 0 -2px; }
.framed { border: 1px solid #707070; height: 24px; padding: 0 1px; margin-right: -2px; }

.work { flex: 1; min-height: 0; display: flex; gap: 4px; }
.nav { flex: none; width: 238px; display: flex; flex-direction: column; border-right: 1px solid #a0a0a0; margin-bottom: 3px; }
.nav-title { flex: none; height: 17px; display: flex; align-items: center; background: #0054e3; color: #fff; }
.nav-title span { flex: 1; }
.pin { width: 9px; height: 9px; margin-right: 4px; }
.nav-title button { width: 17px; height: 13px; display: grid; place-items: center; border: 1px solid #fff; border-right-color: #222; border-bottom-color: #222; }
.nav-title svg { height: 9px; width: 9px; }
.nav-btn { flex: none; height: 22px; border: 1px solid #a0a0a0; border-top-color: #fff; border-left-color: #fff; background: #f0f0f0; text-align: center; }
.nav-tools { flex: none; height: 27px; display: flex; gap: 7px; align-items: center; padding-left: 7px; background: linear-gradient(#fdfdfd, #f0f0f0); }
.treebox { flex: 1; min-height: 0; display: flex; margin: 0 1px 1px 2px; background: #fff; border: 1px solid #828790; overflow: hidden; }
.tree { flex: 1; padding-left: 3px; padding-top: 1px; }
.row { display: flex; align-items: center; height: 16px; gap: 4px; white-space: nowrap; }
.kids { position: relative; padding-left: 40px; }
.tree .kids::before { content: ""; position: absolute; left: 9px; top: 0; bottom: 0; border-left: 1px dotted #808080; }
.kids li { position: relative; display: flex; align-items: center; height: 16px; white-space: nowrap; }
.kids li::before { content: ""; position: absolute; left: -11px; top: 8px; width: 10px; border-top: 1px dotted #808080; }
.kids li::after { content: ""; position: absolute; left: -12px; top: 0; height: 16px; border-left: 1px dotted #808080; }
.kids li:last-child::after { height: 8px; }
.kids li > span { padding: 0 4px; }
.kids .sel { background: #d9d9d9; }
.scroll { flex: none; width: 17px; display: flex; flex-direction: column; background: #f0f0f0; }
.flip { transform: scaleY(-1); }
.track { flex: 1; }
.thumb { height: 81%; background: #cdcdcd; margin-right: 1px; }

.right { flex: 1; min-width: 0; display: flex; flex-direction: column; }
.bar-edit { flex: none; height: 28px; padding-left: 6px; }
.floor { display: flex; align-items: center; gap: 6px; position: relative; margin: 0 -2px 0 -4px; }
.floor select { appearance: none; width: 60px; height: 22px; background: #fff; padding: 0 2px; }
.floor .car { position: absolute; right: 0; }
.panes { flex: 1; min-height: 0; display: flex; gap: 5px; padding-left: 2px; padding-bottom: 3px; }
.comps { flex: none; width: 183px; display: flex; flex-direction: column; padding-top: 4px; gap: 2px; }
.search { display: flex; flex: none; height: 24px; background: #fff; }
.search input { flex: 1; min-width: 0; background: #fff; border: 1px solid #7a7a7a; padding: 0 2px; }
.search input::placeholder { color: #757575; }
.search button { width: 25px; display: grid; place-items: center; }
.complist { flex: 1; background: #fff; border: 1px solid #828790; border-right-width: 2px; padding: 1px 3px; }
.complist .kids { padding-left: 38px; }
.gear { width: 12px; height: 12px; }
.complist .kids span { display: flex; align-items: center; gap: 7px; height: 16px; padding: 0 4px 0 3px; }
.complist .on { background: #316ac5; }

.props { flex: 1; min-width: 0; display: flex; flex-direction: column; }
.tabs { flex: none; height: 20px; display: flex; border-bottom: 1px solid #d9d9d9; background: #fff; }
.tab { width: 62px; background: #fff; border: 1px solid #d9d9d9; border-bottom: 0; margin-bottom: -1px; }
.page { flex: 1; min-height: 0; padding: 3px 1px 2px 2px; border: 1px solid #d9d9d9; border-top: 0; background: #fff; margin-right: 1px; }
.inner { height: 100%; border: 1px solid #a8a8a8; }
table { border-collapse: separate; border-spacing: 0; table-layout: fixed; width: 370px; }
.c1 { width: 22px; } .c2 { width: 191px; } .c3 { width: 126px; } .c4 { width: 31px; }
th, td { height: 19px; padding: 0 0 0 2px; border-right: 1px solid #c0c0c0; border-bottom: 1px solid #c0c0c0; font-weight: 400; line-height: 16px; text-align: left; white-space: nowrap; overflow: hidden; vertical-align: middle; }
th { text-align: center; padding: 0; background: linear-gradient(#fff, #ececec); }
thead th { height: 25px; }
thead .act { background: linear-gradient(#f9dda6, #f1bf5c); color: #600060; }
.blue { color: #00f; }
td.n { position: relative; padding-left: 19px; }
.grp { color: #808080; }
td.sub { padding-left: 29px; }
.sub::before { content: ""; position: absolute; left: 8px; top: 0; bottom: 0; border-left: 1px solid #c0c0c0; }
.sub::after { content: ""; position: absolute; left: 9px; top: 9px; width: 16px; border-top: 1px solid #c0c0c0; }
.last::before { bottom: 8px; }
.cur th { background: #ffd48a; color: #600060; }
.cur .n { background: #0078d7; color: #fff; }
.pm { position: absolute; left: 2px; top: 3px; width: 13px; height: 13px; border: 1px solid #b0b0b0; }
.pm svg { width: 11px; height: 11px; }
.rb { display: inline-block; width: 12px; height: 12px; vertical-align: -2px; }
.val { display: block; width: 32px; height: 14px; background: #0078d7; color: #fff; }
input[type="checkbox"] { appearance: none; display: block; width: 13px; height: 13px; border: 1px solid #333; background: #fff; margin: 0 auto 0 7px; }

.status { flex: none; height: 20px; display: flex; gap: 2px; }
.status span { border: 1px solid #d4d4d4; background: linear-gradient(#fff, #f0f0f0); padding-left: 1px; line-height: 18px; white-space: nowrap; overflow: hidden; flex: none; }
.status i { font-style: normal; font-feature-settings: normal; }
.s1 { width: 148px; } .s2 { width: 78px; } .s3 { width: 98px; } .s4 { width: 48px; } .status .s5 { flex: 1; min-width: 0; } .s6 { width: 70px; }

.taskbar { flex: none; height: 40px; display: flex; background: #000b0f; color: #fff; }
.start { width: 48px; display: grid; place-items: center; background: #000; }
.cortana { width: 344px; background: #333; display: flex; align-items: center; gap: 4px; padding: 0 14px 0 8px; }
.ring { width: 24px; height: 24px; }
.cortana input { flex: 1; font-size: 14px; }
.cortana input::placeholder { color: #999; }
.micl { width: 12px; height: 16px; }
.apps { display: flex; gap: 1px; margin-left: 2px; }
.apps button { width: 48px; display: grid; place-items: center; border-bottom: 2px solid transparent; }
.apps svg { width: 24px; height: 24px; }
.apps .run { background: linear-gradient(#76b9ed, #76b9ed) bottom / 40px 2px no-repeat; border: 0; }
.apps .active { background: #333c40; border-bottom: 2px solid #76b9ed; }
.grip { width: 4px; height: 16px; border: 1px solid #444; border-width: 0 1px; align-self: center; margin: 0 10px; }
.cpu, .clock { display: flex; flex-direction: column; justify-content: center; gap: 2px; text-align: center; }
.cpu { margin-left: auto; width: 70px; }
.tray { display: flex; align-items: center; gap: 8px; padding: 0 12px 0 7px; }
.tray svg { width: 16px; height: 16px; }
.tray b { font-weight: 400; }
.tray .sg { margin-left: 7px; }
.clock { width: 66px; }
.notice { width: 53px; margin-right: 5px; display: grid; place-items: center; background: #000; border-right: 1px solid #555; }

.marks { position: absolute; inset: 0; width: 100%; height: 100%; z-index: 5; pointer-events: none; }
.marks ellipse { fill: none; stroke: #f00; stroke-width: 3; }
```
